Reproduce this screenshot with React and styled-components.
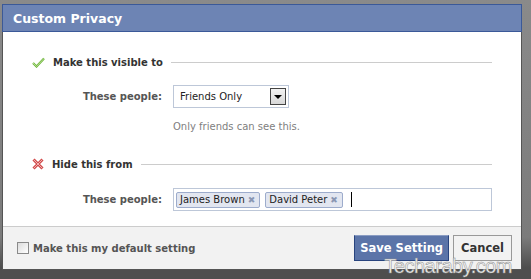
import styled, { createGlobalStyle } from "styled-components";

const GlobalStyle = createGlobalStyle`
  body {
    margin: 0;
    background: #7a7a7a;
  }
`;

const Frame = styled.div`
  position: relative;
  width: 531px;
  height: 279px;
  box-sizing: border-box;
  padding: 4px 9px 9px 2px;
  background: linear-gradient(#8a8a8a, #7b7b7b 85%, #4e4e4e 96%);
  overflow: hidden;
  font-family: "DejaVu Sans", Tahoma, sans-serif;
`;

const Dialog = styled.div`
  height: 100%;
  display: flex;
  flex-direction: column;
  box-sizing: border-box;
  background: #fff;
  border: 1px solid #555;
  border-top: none;
`;

const Header = styled.div`
  height: 28px;
  box-sizing: border-box;
  background: #6d84b4;
  border: 1px solid #3b5998;
  margin: 0 -1px;
  display: flex;
  align-items: center;
  padding-left: 10px;
  color: #fff;
  font-size: 12.5px;
  font-weight: bold;
`;

const Body = styled.div`
  flex: 1;
  padding: 22px 29px 0 0;
`;

const Heading = styled.div`
  display: flex;
  align-items: center;
  gap: 8px;
  height: 16px;
  padding-left: 29px;
  margin-bottom: ${(p) => p.$gap}px;
  font-size: 10px;
  font-weight: bold;
  color: #333;
`;

const Rule = styled.div`
  flex: 1;
  height: 1px;
  background: #ccc;
`;

const Field = styled.div`
  display: flex;
  align-items: center;
  gap: 11px;
`;

const Label = styled.div`
  width: 159px;
  text-align: right;
  font-size: 10px;
  font-weight: bold;
  color: #555;
`;

const Select = styled.div`
  width: 116px;
  height: 23px;
  box-sizing: border-box;
  border: 1px solid #bdc7d8;
  display: flex;
  align-items: center;
  justify-content: space-between;
  padding: 0 2px 0 6px;
  font-size: 10px;
  color: #222;
`;

const DropButton = styled.div`
  width: 16px;
  height: 17px;
  box-sizing: border-box;
  border: 1px solid #444;
  background: linear-gradient(#f2f2f2, #d8d8d8);
  display: flex;
  align-items: center;
  justify-content: center;
  &::after {
    content: "";
    border-left: 4px solid transparent;
    border-right: 4px solid transparent;
    border-top: 4px solid #000;
  }
`;

const Hint = styled.div`
  padding-left: 170px;
  margin: 13px 0 0;
  height: 14px;
  font-size: 10px;
  color: #808080;
`;

const TokenInput = styled.div`
  flex: 1;
  height: 23px;
  box-sizing: border-box;
  border: 1px solid #bdc7d8;
  display: flex;
  align-items: center;
  gap: 5px;
  padding-left: 2px;
`;

const Token = styled.span`
  display: inline-flex;
  align-items: center;
  gap: 3px;
  height: 16px;
  box-sizing: border-box;
  padding: 0 4px 0 3px;
  background: #e2e6f0;
  border: 1px solid #9daccc;
  border-radius: 2px;
  font-size: 10px;
  color: #222;
  white-space: nowrap;
`;

const Remove = styled.span`
  color: #8a97b3;
  font-size: 9px;
  font-weight: bold;
`;

const Caret = styled.span`
  width: 1px;
  height: 15px;
  background: #000;
  margin-left: 3px;
`;

const Footer = styled.div`
  height: 43px;
  box-sizing: border-box;
  background: #f2f2f2;
  border-top: 1px solid #ccc;
  display: flex;
  align-items: center;
  padding: 0 9px 0 14px;
`;

const Check = styled.span`
  width: 12px;
  height: 12px;
  box-sizing: border-box;
  border: 1px solid #8a8a8a;
  background: linear-gradient(135deg, #dcdcdc, #fff);
  margin-right: 4px;
`;

const CheckLabel = styled.span`
  flex: 1;
  font-size: 10px;
  font-weight: bold;
  color: #555;
`;

const Button = styled.button`
  height: 26px;
  box-sizing: border-box;
  margin-left: 4px;
  padding: 0 ${(p) => (p.$primary ? 5 : 7)}px;
  font-family: inherit;
  font-size: 11.5px;
  font-weight: bold;
  color: ${(p) => (p.$primary ? "#fff" : "#333")};
  background: ${(p) => (p.$primary ? "#5b74a8" : "#f2f2f2")};
  border: 1px solid ${(p) => (p.$primary ? "#29447e" : "#999")};
  border-top-color: ${(p) => (p.$primary ? "#8a9cc2" : "#999")};
`;

const Watermark = styled.div`
  position: absolute;
  right: 19px;
  bottom: 1px;
  font-family: "Liberation Sans", Arial, sans-serif;
  font-size: 20px;
  letter-spacing: -0.5px;
  color: #f4f4f4;
  -webkit-text-stroke: 0.5px #8c8c8c;
  pointer-events: none;
`;

function CheckIcon() {
  return (
    <svg width="13" height="11" viewBox="0 0 13 11">
      <path d="M1 6 L4.5 9.5 L12 1.5" fill="none" stroke="#6fb43c" strokeWidth="2.2" />
      <path d="M1 6 L4.5 9.5 L12 1.5" fill="none" stroke="#c4e8a4" strokeWidth="0.8" />
    </svg>
  );
}

function CrossIcon() {
  return (
    <svg width="12" height="12" viewBox="0 0 12 12">
      <path d="M1.5 1.5 L10.5 10.5 M10.5 1.5 L1.5 10.5" stroke="#d14b4b" strokeWidth="3" />
      <path d="M1.5 1.5 L10.5 10.5 M10.5 1.5 L1.5 10.5" stroke="#f0b0b0" strokeWidth="1" />
    </svg>
  );
}

export default function App() {
  return (
    <>
      <GlobalStyle />
      <Frame>
        <Dialog>
          <Header>Custom Privacy</Header>
          <Body>
            <Heading $gap={15}>
              <CheckIcon />
              Make this visible to
              <Rule />
            </Heading>
            <Field>
              <Label>These people:</Label>
              <Select>
                Friends Only
                <DropButton />
              </Select>
            </Field>
            <Hint>Only friends can see this.</Hint>
            <Heading $gap={16} style={{ marginTop: 21 }}>
              <CrossIcon />
              Hide this from
              <Rule />
            </Heading>
            <Field>
              <Label>These people:</Label>
              <TokenInput>
                <Token>
                  James Brown <Remove>✖</Remove>
                </Token>
                <Token>
                  David Peter <Remove>✖</Remove>
                </Token>
                <Caret />
              </TokenInput>
            </Field>
          </Body>
          <Footer>
            <Check />
            <CheckLabel>Make this my default setting</CheckLabel>
            <Button $primary>Save Setting</Button>
            <Button>Cancel</Button>
          </Footer>
        </Dialog>
        <Watermark>Techaraby.com</Watermark>
      </Frame>
    </>
  );
}
